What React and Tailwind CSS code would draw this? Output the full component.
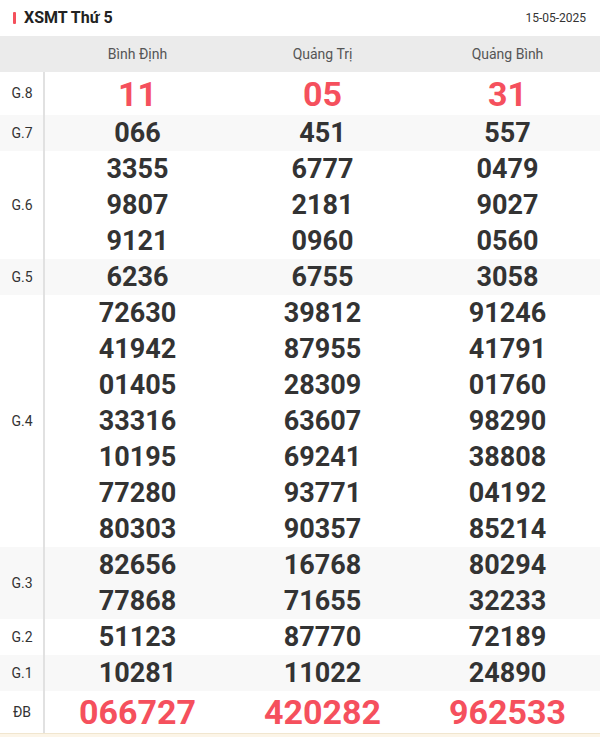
import React from "react";

const rows = [
  { label: "G.8", vals: [["11"], ["05"], ["31"]], big: true, h: "h-[43px]", alt: false },
  { label: "G.7", vals: [["066"], ["451"], ["557"]], alt: true },
  { label: "G.6", vals: [["3355", "9807", "9121"], ["6777", "2181", "0960"], ["0479", "9027", "0560"]], alt: false },
  { label: "G.5", vals: [["6236"], ["6755"], ["3058"]], alt: true },
  {
    label: "G.4",
    vals: [
      ["72630", "41942", "01405", "33316", "10195", "77280", "80303"],
      ["39812", "87955", "28309", "63607", "69241", "93771", "90357"],
      ["91246", "41791", "01760", "98290", "38808", "04192", "85214"],
    ],
    alt: false,
  },
  { label: "G.3", vals: [["82656", "77868"], ["16768", "71655"], ["80294", "32233"]], alt: true },
  { label: "G.2", vals: [["51123"], ["87770"], ["72189"]], alt: false },
  { label: "G.1", vals: [["10281"], ["11022"], ["24890"]], alt: true },
  { label: "ĐB", vals: [["066727"], ["420282"], ["962533"]], big: true, h: "h-[42px]", alt: false },
];

export default function App() {
  return (
    <div className="w-[600px] h-[737px] bg-white overflow-hidden" style={{ fontFamily: "Roboto, 'Liberation Sans', sans-serif" }}>
      <div className="h-[36px] flex items-center justify-between pl-[13px] pr-[14px]">
        <div className="flex items-center">
          <span className="w-[3px] h-[12px] bg-[#f4505c] rounded-[1px] mr-[8px]"></span>
          <span className="text-[16px] font-bold text-[#222] leading-none">XSMT Thứ 5</span>
        </div>
        <span className="text-[12px] text-[#333]">15-05-2025</span>
      </div>
      <div className="grid grid-cols-[45px_1fr_1fr_1fr] h-[36px] bg-[#ebebeb] items-center text-[14px] text-[#555]">
        <div></div>
        <div className="text-center">Bình Định</div>
        <div className="text-center">Quảng Trị</div>
        <div className="text-center">Quảng Bình</div>
      </div>
      {rows.map((r) => (
        <div key={r.label} className={"grid grid-cols-[45px_1fr_1fr_1fr] " + (r.alt ? "bg-[#f8f8f8]" : "bg-white")}>
          <div className="border-r-2 border-[#e1e1e1] flex items-center justify-center pl-[1px] text-[14px] text-[#333]">{r.label}</div>
          {r.vals.map((col, i) => (
            <div key={i} className="flex flex-col items-center">
              {col.map((v) =>
                r.big ? (
                  <div key={v} className={r.h + " flex items-center justify-center text-[34px] font-bold text-[#f5505d] leading-none"}>{v}</div>
                ) : (
                  <div key={v} className="h-[36px] flex items-center justify-center text-[27px] font-bold text-[#333] leading-none">{v}</div>
                )
              )}
            </div>
          ))}
        </div>
      ))}
      <div className="h-[4px] bg-[#fcf5e8] border-t border-[#f1e6cf]"></div>
    </div>
  );
}
